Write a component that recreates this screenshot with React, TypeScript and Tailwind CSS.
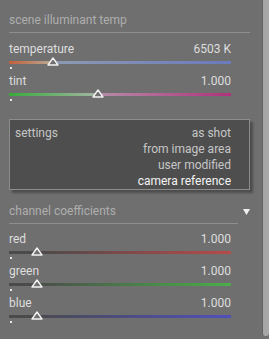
import React from "react";

function Thumb({ pos }: { pos: number }) {
  return (
    <svg
      className="absolute"
      style={{ left: `calc(${pos}% - 6px)`, top: "-4px" }}
      width="12"
      height="9"
      viewBox="0 0 12 9"
    >
      <polygon points="6,1 11,8 1,8" fill="#6f6f6f" stroke="#f2f2f2" strokeWidth="1.4" strokeLinejoin="round" />
    </svg>
  );
}

function Slider({
  label,
  value,
  pos,
  left,
  right,
}: {
  label: string;
  value: string;
  pos: number;
  left: string;
  right: string;
}) {
  return (
    <div className="mr-[19px] h-[32px] flex flex-col">
      <div className="flex justify-between h-[16px] leading-[16px] text-[#dedede]">
        <span>{label}</span>
        <span>{value}</span>
      </div>
      <div className="relative mt-[4px] h-[3px] flex">
        <div style={{ width: `${pos}%`, background: left }} className="h-full" />
        <div style={{ background: right }} className="h-full flex-1" />
        <Thumb pos={pos} />
      </div>
      <div className="mt-[3px] ml-[1px] w-[2px] h-[2px] bg-[#e8e8e8]" />
    </div>
  );
}

export default function App() {
  return (
    <div
      className="flex w-[269px] h-[339px] bg-[#6f6f6f] text-[12px] overflow-hidden"
      style={{ fontFamily: "Roboto, 'Noto Sans', sans-serif" }}
    >
      <div className="w-[262px] pl-[9px] pr-[12px] flex flex-col">
        <div className="pt-[12px] pb-[4px] border-b border-[#8e8e8e] leading-[16px] text-[#aeaeae]">
          scene illuminant temp
        </div>
        <div className="mt-[8px]">
          <Slider
            label="temperature"
            value="6503 K"
            pos={20}
            left="linear-gradient(to right, #c2603c, #b8aa94)"
            right="linear-gradient(to right, #8e9ab2, #6a7abc)"
          />
          <Slider
            label="tint"
            value="1.000"
            pos={40}
            left="linear-gradient(to right, #38aa3c, #a4b6a4)"
            right="linear-gradient(to right, #b48ea8, #b0327c)"
          />
        </div>
        <div className="mt-[14px] h-[71px] border border-[#8c8c8c] bg-[#4e4e4e] shadow-[3px_3px_2px_rgba(0,0,0,0.3)] pt-[5px] pl-[5px] pr-[18px] text-[#c6c6c6] leading-[16px]">
          <div className="flex justify-between">
            <span>settings</span>
            <span>as shot</span>
          </div>
          <div className="text-right">from image area</div>
          <div className="text-right">user modified</div>
          <div className="text-right text-[#f4f4f4]">camera reference</div>
        </div>
        <div className="mt-[13px] flex items-start">
          <div className="flex-1 pb-[4px] border-b border-[#8e8e8e] leading-[16px] text-[#aeaeae]">
            channel coefficients
          </div>
          <svg className="ml-[5px] mt-[6px]" width="7" height="6" viewBox="0 0 7 6">
            <polygon points="0,0 7,0 3.5,6" fill="#f0f0f0" />
          </svg>
        </div>
        <div className="mt-[7px]">
          <Slider
            label="red"
            value="1.000"
            pos={12.5}
            left="#4a4c4c"
            right="linear-gradient(to right, #4c4a4a, #b84a4a)"
          />
          <Slider
            label="green"
            value="1.000"
            pos={12.5}
            left="#4a4a4c"
            right="linear-gradient(to right, #4a4e4a, #4aae4a)"
          />
          <Slider
            label="blue"
            value="1.000"
            pos={12.5}
            left="#4a4a4a"
            right="linear-gradient(to right, #4a4a50, #5050bc)"
          />
        </div>
      </div>
      <div className="w-[7px] h-[336px] border-l border-[#626262] bg-[#a6a6a6] rounded-b-[3px]" />
    </div>
  );
}
